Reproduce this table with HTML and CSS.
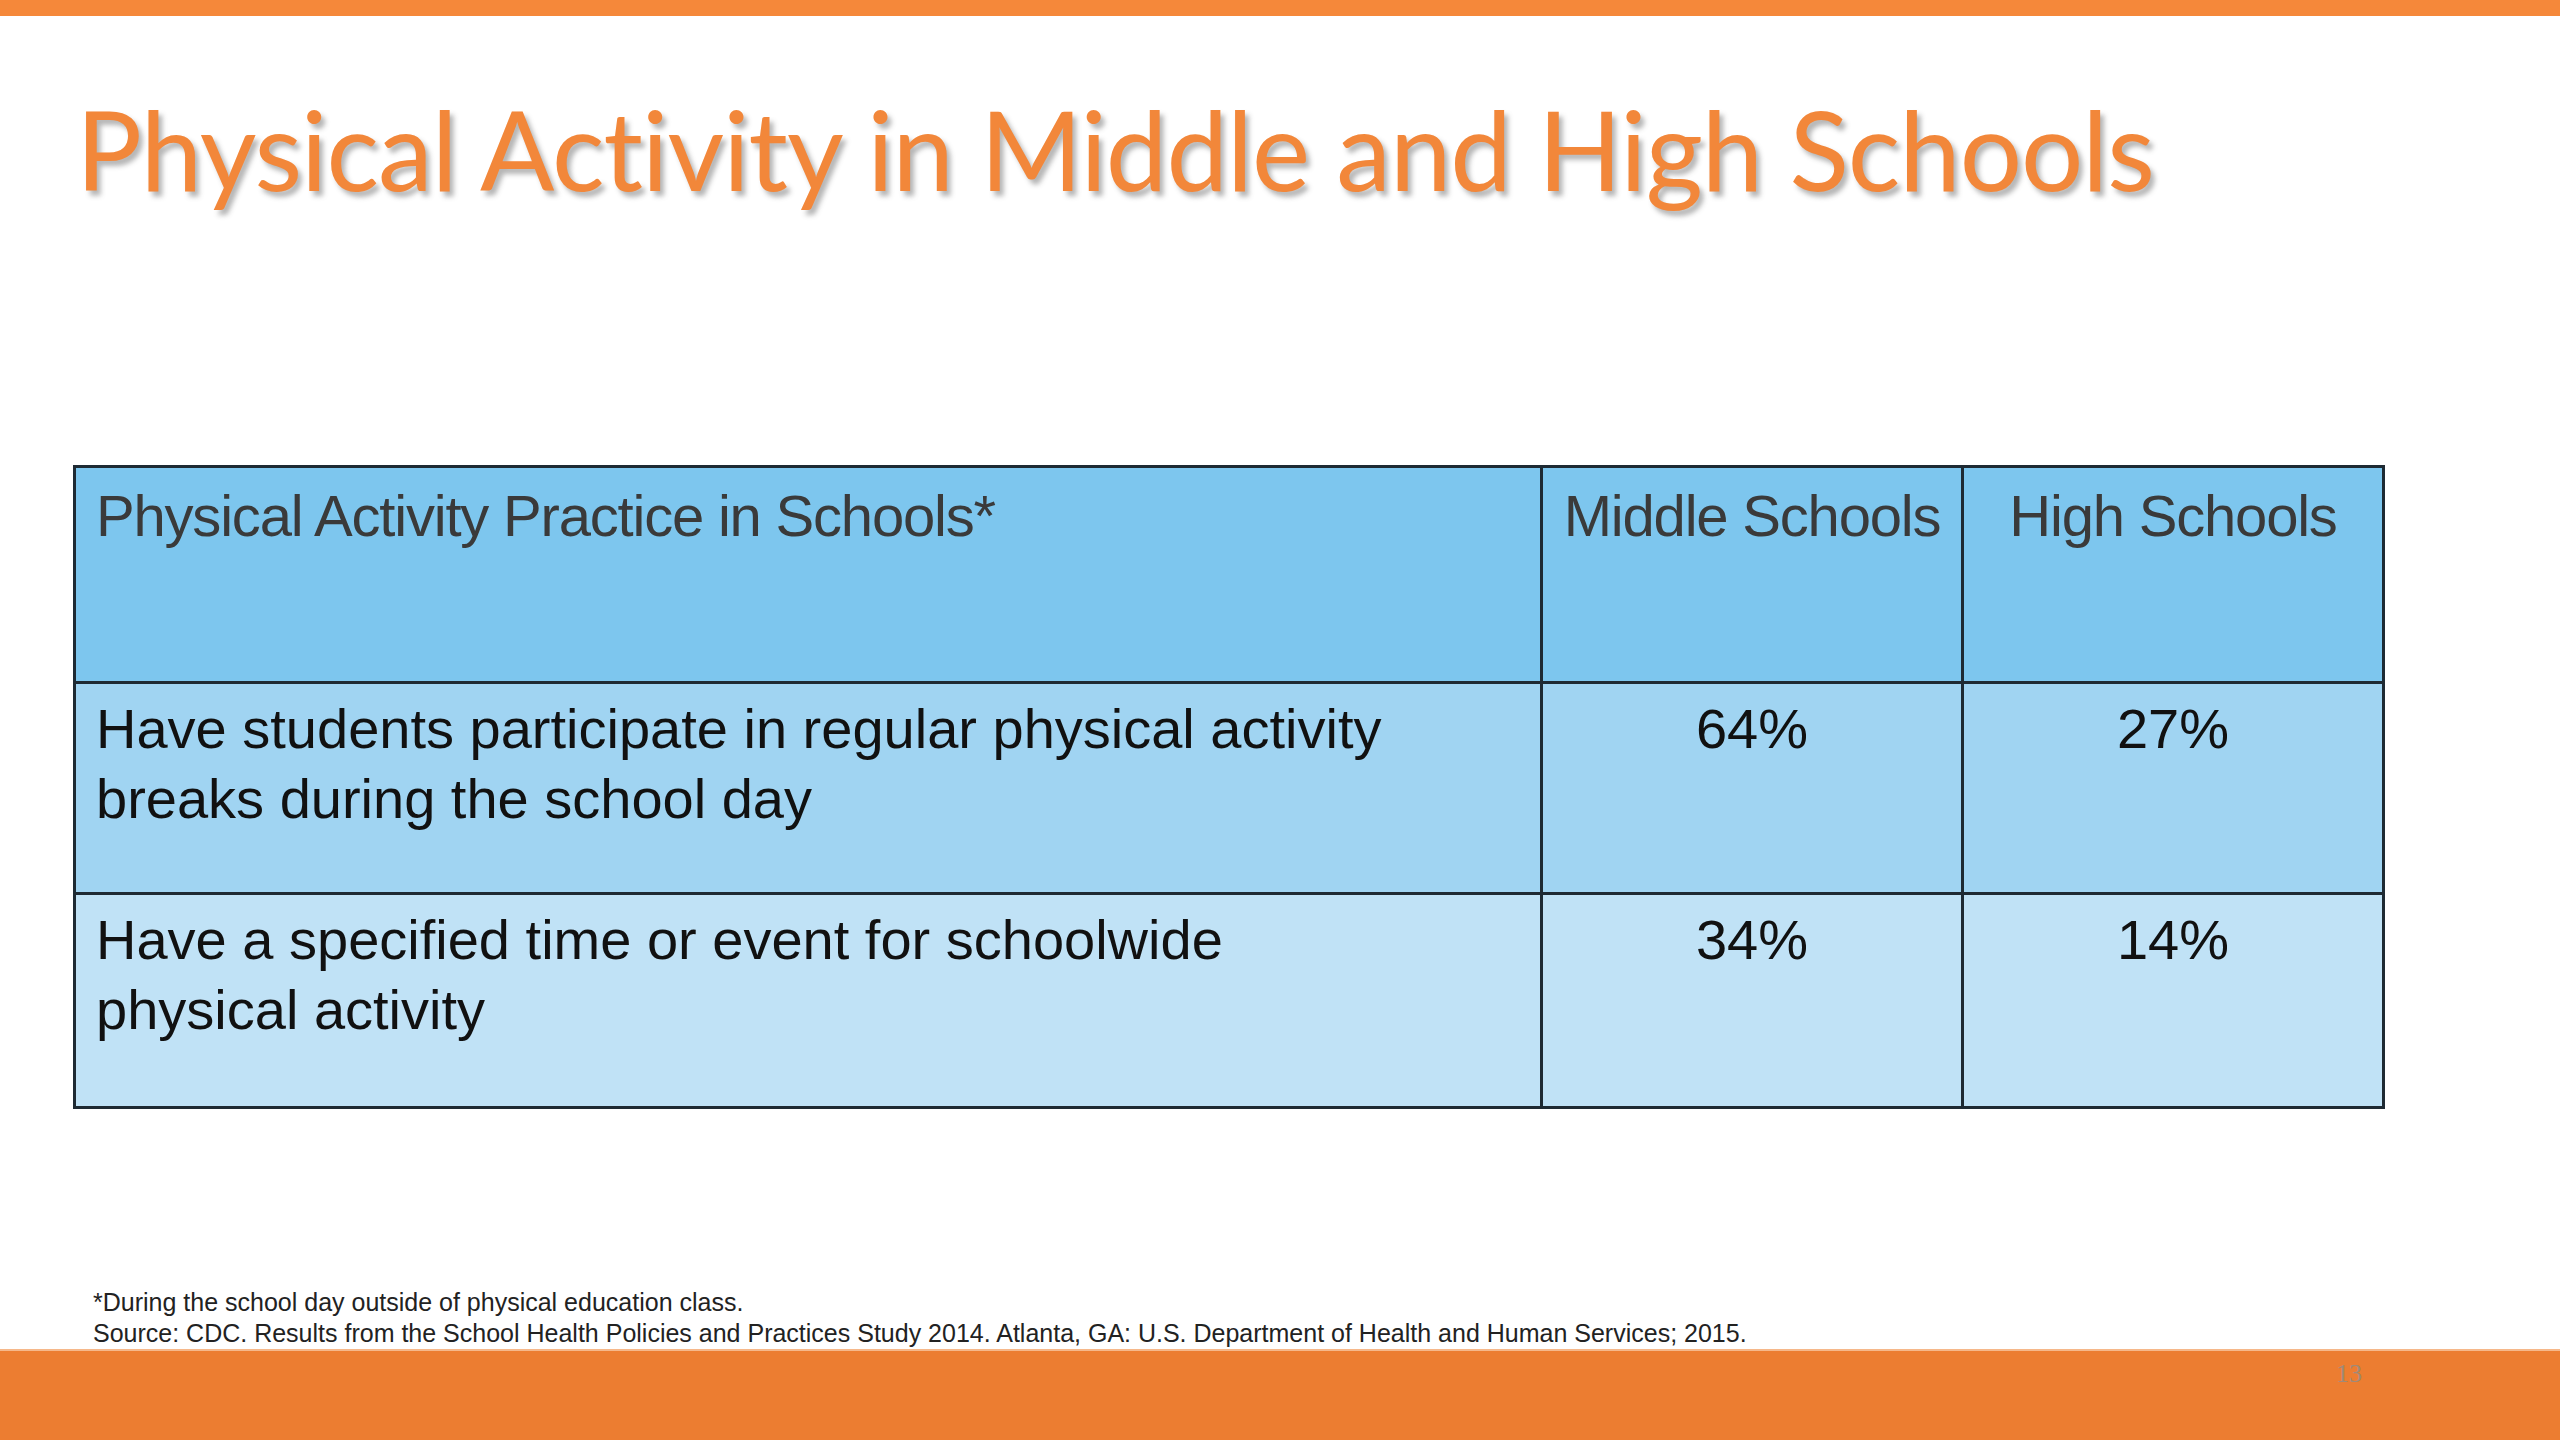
FILE: index.html
```html
<!DOCTYPE html>
<html lang="en">
<head>
<meta charset="utf-8">
<title>Physical Activity in Middle and High Schools</title>
<link rel="stylesheet" href="styles.css">
</head>
<body>
<div class="slide">
  <div class="top-bar"></div>
  <h1 class="title">Physical Activity in Middle and High Schools</h1>
  <table class="data">
    <colgroup>
      <col class="c-practice">
      <col class="c-num">
      <col class="c-num">
    </colgroup>
    <thead>
      <tr class="row-head">
        <th class="left">Physical Activity Practice in Schools*</th>
        <th>Middle Schools</th>
        <th>High Schools</th>
      </tr>
    </thead>
    <tbody>
      <tr class="row-a">
        <td class="left">Have students participate in regular physical activity breaks during the school day</td>
        <td>64%</td>
        <td>27%</td>
      </tr>
      <tr class="row-b">
        <td class="left">Have a specified time or event for schoolwide physical activity</td>
        <td>34%</td>
        <td>14%</td>
      </tr>
    </tbody>
  </table>
  <div class="notes">
    <p>*During the school day outside of physical education class.</p>
    <p>Source: CDC. Results from the School Health Policies and Practices Study 2014. Atlanta, GA: U.S. Department of Health and Human Services; 2015.</p>
  </div>
  <div class="bottom-bar">
    <span class="page-num">13</span>
  </div>
</div>
</body>
</html>
```

FILE: styles.css
```css
html, body {
  margin: 0;
  padding: 0;
  background: #ffffff;
}

.slide {
  width: 2560px;
  height: 1440px;
  display: flex;
  flex-direction: column;
  background: #ffffff;
  overflow: hidden;
}

.top-bar {
  height: 16px;
  background: #f5883a;
  flex: none;
}

.title {
  margin: 64px 0 0 76px;
  font-family: "Lato", "Open Sans", sans-serif;
  font-weight: 400;
  font-size: 110px;
  line-height: 136px;
  color: #f2873a;
  text-shadow: 4px 5px 5px rgba(90, 90, 90, 0.45);
  letter-spacing: -1px;
  white-space: nowrap;
}

.data {
  margin: 249px 0 0 73px;
  width: 2311px;
  border-collapse: collapse;
  table-layout: fixed;
  border: 3px solid #1e2a33;
  font-family: "Liberation Sans", Arial, sans-serif;
}

.c-practice { width: 1467px; }
.c-num { width: 421px; }

.data th,
.data td {
  border: 3px solid #1e2a33;
  vertical-align: top;
  text-align: center;
  padding: 10px 4px 0 4px;
}

.data .left {
  text-align: left;
  padding-left: 20px;
  padding-right: 130px;
}

.data th {
  font-weight: 400;
  font-size: 58px;
  line-height: 70px;
  letter-spacing: -1.2px;
  color: #3a3a3a;
  height: 200px;
  padding-top: 13px;
  white-space: nowrap;
}

.data td {
  font-size: 56px;
  line-height: 70px;
  color: #111111;
}

.row-a td { height: 198px; }
.row-b td { height: 201px; }

.row-head { background: #7dc6ee; }
.row-a { background: #a0d4f2; }
.row-b { background: #c0e2f6; }

.notes {
  margin: 178px 0 0 93px;
  font-family: "Liberation Sans", Arial, sans-serif;
  font-size: 25px;
  line-height: 31px;
  color: #222222;
}

.notes p {
  margin: 0;
}

.bottom-bar {
  margin-top: auto;
  height: 90px;
  background: #ec7d31;
  border-top: 2px solid #f6b88a;
  position: relative;
  flex: none;
}

.page-num {
  position: absolute;
  left: 2336px;
  top: 8px;
  font-family: "Liberation Serif", serif;
  font-size: 26px;
  color: #a08a78;
}
```
